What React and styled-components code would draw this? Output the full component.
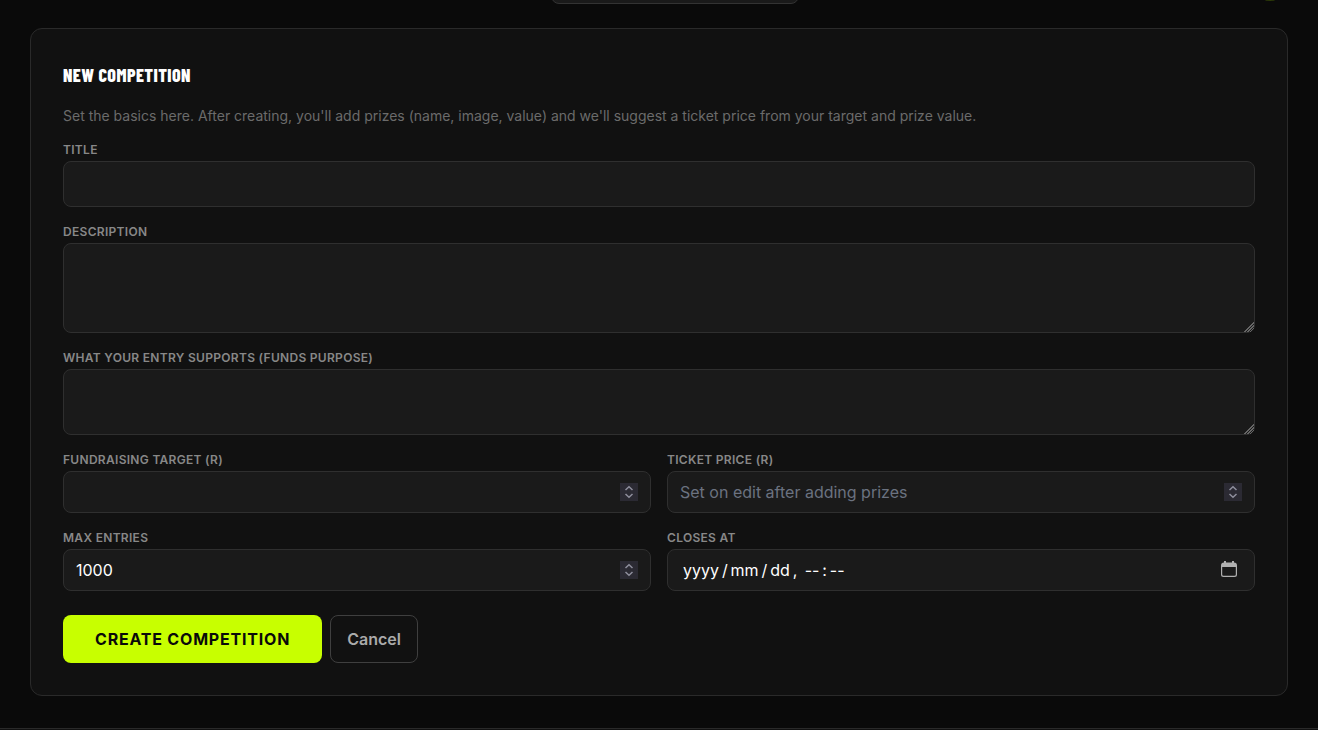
import React from "react";
import styled, { createGlobalStyle } from "styled-components";

const Global = createGlobalStyle`
  *, *::before, *::after { box-sizing: border-box; }
  body {
    margin: 0;
    background: #0a0a0a;
    color: #fff;
    color-scheme: dark;
    font: 400 16px/24px Inter, "Liberation Sans", sans-serif;
  }
  button, input, textarea { font: inherit; color: inherit; }
`;

const TopBar = styled.header`
  display: flex;
  justify-content: space-between;
  align-items: flex-start;
  height: 28px;
  padding: 0 43px 0 75px;
  overflow: hidden;
`;
const BarSide = styled.div`
  flex: 1;
  display: flex;
  justify-content: flex-end;
`;
const Pill = styled.div`
  width: 248px;
  height: 40px;
  margin-top: -36px;
  border: 1px solid #333;
  border-radius: 8px;
  background: #1a1a1a;
`;
const Avatar = styled.div`
  width: 10px;
  height: 1px;
  border-radius: 50%;
  background: #2c3a08;
`;
const Main = styled.main`
  padding: 0 30px 32px;
`;
const Card = styled.form`
  padding: 32px;
  background: #111;
  border: 1px solid #2a2a2a;
  border-radius: 12px;
`;
const Heading = styled.h2`
  margin: 0 0 16px;
  font: 800 18px/28px "Barlow Condensed", "Liberation Sans Narrow", "Roboto Condensed", Roboto, sans-serif;
  letter-spacing: 0.025em;
  text-transform: uppercase;
`;
const Intro = styled.p`
  margin: 0 0 14px;
  font-size: 14px;
  line-height: 22px;
  color: #6b6b6b;
`;
const Fields = styled.div`
  display: grid;
  grid-template-columns: 1fr 1fr;
  gap: 16px;
`;
const Field = styled.div`
  display: flex;
  flex-direction: column;
  gap: 2px;
  min-width: 0;
  grid-column: ${(p) => (p.$wide ? "1 / -1" : "auto")};
`;
const Label = styled.label`
  font-size: 12px;
  font-weight: 600;
  line-height: 18px;
  letter-spacing: 0.025em;
  text-transform: uppercase;
  color: #888;
`;
const Box = styled.div`
  display: flex;
  align-items: center;
  padding: ${(p) => (p.$tall ? "10px 12px" : "8px 12px")};
  background: #1a1a1a;
  border: 1px solid #2f2f2f;
  border-radius: 8px;
`;
const Input = styled.input`
  flex: 1;
  min-width: 0;
  height: 24px;
  padding: 0;
  border: 0;
  outline: 0;
  background: transparent;
  color: #fff;
  appearance: textfield;
  &::placeholder { color: #6b7280; opacity: 1; }
  &::-webkit-inner-spin-button { appearance: none; margin: 0; }
`;
const DateInput = styled(Input)`
  padding-left: 3px;
`;
const Area = styled.textarea`
  display: block;
  width: 100%;
  padding: 8px 12px;
  background: #1a1a1a;
  border: 1px solid #2f2f2f;
  border-radius: 8px;
  outline: 0;
  resize: vertical;
  &::-webkit-resizer {
    background: linear-gradient(135deg,
      transparent 14px, #666 14px 15px,
      transparent 15px 16px, #666 16px 17px,
      transparent 17px 18px, #666 18px 19px,
      transparent 19px);
  }
`;
const Stepper = styled.button`
  display: block;
  width: 18px;
  height: 18px;
  padding: 0;
  border: 0;
  background: #2b2a33;
  color: #8f8f9d;
`;
const Picker = styled.button`
  display: block;
  width: 20px;
  height: 20px;
  margin-right: 3px;
  padding: 0;
  border: 0;
  background: none;
  color: #b0b0b0;
`;
const Actions = styled.div`
  display: flex;
  gap: 8px;
  margin-top: 24px;
`;
const Button = styled.button`
  height: 48px;
  padding: ${(p) => (p.$primary ? "0 32px" : "0 16px")};
  border: ${(p) => (p.$primary ? "0" : "1px solid #3f3f3f")};
  border-radius: 8px;
  background: ${(p) => (p.$primary ? "#c8ff00" : "transparent")};
  color: ${(p) => (p.$primary ? "#0a0a0a" : "#aaa")};
  font-weight: ${(p) => (p.$primary ? 700 : 600)};
  letter-spacing: ${(p) => (p.$primary ? "0.05em" : "normal")};
  text-transform: ${(p) => (p.$primary ? "uppercase" : "none")};
`;
const Footer = styled.footer`
  border-top: 1px solid #2a2a2a;
  padding-top: 1px;
  background: #111;
`;

const NumberBox = ({ id, ...rest }) => (
  <Box>
    <Input id={id} type="number" {...rest} />
    <Stepper type="button" aria-label="Change value">
      <svg width="18" height="18" viewBox="0 0 18 18" fill="none" stroke="currentColor" strokeWidth="1.5">
        <path d="M5.500 7 9 3.800 12.500 7M5.500 11 9 14.200 12.500 11" />
      </svg>
    </Stepper>
  </Box>
);

export default function App() {
  return (
    <>
      <Global />
      <TopBar>
        <BarSide />
        <Pill />
        <BarSide>
          <Avatar />
        </BarSide>
      </TopBar>
      <Main>
        <Card onSubmit={(e) => e.preventDefault()}>
          <Heading>New competition</Heading>
          <Intro>
            Set the basics here. After creating, you'll add prizes (name, image, value) and we'll
            suggest a ticket price from your target and prize value.
          </Intro>
          <Fields>
            <Field $wide>
              <Label htmlFor="title">Title</Label>
              <Box $tall>
                <Input id="title" type="text" />
              </Box>
            </Field>
            <Field $wide>
              <Label htmlFor="description">Description</Label>
              <Area id="description" rows={3} />
            </Field>
            <Field $wide>
              <Label htmlFor="purpose">What your entry supports (funds purpose)</Label>
              <Area id="purpose" rows={2} />
            </Field>
            <Field>
              <Label htmlFor="target">Fundraising target (R)</Label>
              <NumberBox id="target" />
            </Field>
            <Field>
              <Label htmlFor="price">Ticket price (R)</Label>
              <NumberBox id="price" placeholder="Set on edit after adding prizes" />
            </Field>
            <Field>
              <Label htmlFor="entries">Max entries</Label>
              <NumberBox id="entries" defaultValue="1000" />
            </Field>
            <Field>
              <Label htmlFor="closes">Closes at</Label>
              <Box>
                <DateInput id="closes" type="text" defaultValue={"yyyy\u2009/\u2009mm\u2009/\u2009dd\u2009,\u2009 --\u2009:\u2009--"} />
                <Picker type="button" aria-label="Open calendar">
                  <svg width="20" height="20" viewBox="0 0 20 20" fill="currentColor">
                    <path fillRule="evenodd" d="M5 1h2v1.500h6V1h2v1.500a3 3 0 0 1 3 3v9a2.500 2.500 0 0 1-2.500 2.500h-11A2.500 2.500 0 0 1 2 14.500v-9a3 3 0 0 1 3-3zM3.200 7v7.500a1.300 1.300 0 0 0 1.300 1.300h11a1.300 1.300 0 0 0 1.300-1.300V7z" />
                  </svg>
                </Picker>
              </Box>
            </Field>
          </Fields>
          <Actions>
            <Button type="submit" $primary>Create competition</Button>
            <Button type="button">Cancel</Button>
          </Actions>
        </Card>
      </Main>
      <Footer />
    </>
  );
}
